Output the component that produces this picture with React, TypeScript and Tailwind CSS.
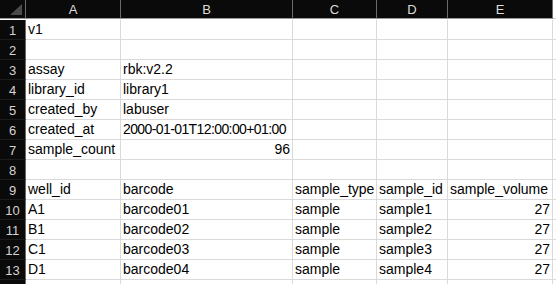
import React from "react";

type Cell = { t: string; r?: boolean; tight?: boolean };

const rows: Cell[][] = [
  [{ t: "v1" }],
  [],
  [{ t: "assay" }, { t: "rbk:v2.2" }],
  [{ t: "library_id" }, { t: "library1" }],
  [{ t: "created_by" }, { t: "labuser" }],
  [{ t: "created_at" }, { t: "2000-01-01T12:00:00+01:00", tight: true }],
  [{ t: "sample_count" }, { t: "96", r: true }],
  [],
  [{ t: "well_id" }, { t: "barcode" }, { t: "sample_type" }, { t: "sample_id" }, { t: "sample_volume" }],
  [{ t: "A1" }, { t: "barcode01" }, { t: "sample" }, { t: "sample1" }, { t: "27", r: true }],
  [{ t: "B1" }, { t: "barcode02" }, { t: "sample" }, { t: "sample2" }, { t: "27", r: true }],
  [{ t: "C1" }, { t: "barcode03" }, { t: "sample" }, { t: "sample3" }, { t: "27", r: true }],
  [{ t: "D1" }, { t: "barcode04" }, { t: "sample" }, { t: "sample4" }, { t: "27", r: true }],
];

const letters = ["A", "B", "C", "D", "E"];

export default function App() {
  return (
    <div
      className="w-[556px] h-[284px] overflow-hidden bg-white"
      style={{ fontFamily: '"Liberation Sans", Arial, sans-serif' }}
    >
      <div className="grid grid-cols-[26px_95px_172px_84px_71px_105px_3px] auto-rows-[20px]">
        {/* header */}
        <div className="h-[19px] bg-[#0a0a0a] border-r border-b border-r-[#6b6b6b] border-b-[#9a9a9a] relative">
          <svg className="absolute left-0 top-0" width="25" height="18" viewBox="0 0 25 18">
            <polygon points="10,15 22,15 22,4" fill="#4a4a4a" />
          </svg>
        </div>
        {letters.map((l) => (
          <div
            key={l}
            className="h-[19px] bg-[#0a0a0a] border-r border-b border-r-[#6b6b6b] border-b-[#9a9a9a] flex items-center justify-center text-[13px] leading-none text-[#dcdcdc]"
          >
            {l}
          </div>
        ))}
        <div className="h-[19px] bg-white border-b border-b-[#d4d4d4]" />
        {/* body */}
        {rows.map((row, i) => (
          <React.Fragment key={i}>
            <div className="bg-[#0a0a0a] border-r border-b border-r-[#6b6b6b] border-b-[#1c1c1c] flex items-center justify-center text-[13px] leading-none text-[#d4d4d4] pt-[1px]">
              {i + 1}
            </div>
            {[0, 1, 2, 3, 4].map((c) => {
              const cell = row[c];
              return (
                <div
                  key={c}
                  className={
                    "border-r border-b border-[#dadada] flex items-end pb-[2px] px-[2px] text-[14px] leading-[16px] text-black whitespace-nowrap overflow-visible " +
                    (cell && cell.r ? "justify-end " : "justify-start ") +
                    (cell && cell.tight ? "tracking-[-0.6px]" : "")
                  }
                >
                  {cell ? cell.t : ""}
                </div>
              );
            })}
            <div className="border-b border-[#dadada]" />
          </React.Fragment>
        ))}
        {/* partial row 14 */}
        <div className="bg-[#0a0a0a] border-r border-r-[#6b6b6b]" />
        {[0, 1, 2, 3, 4].map((c) => (
          <div key={c} className="border-r border-[#dadada]" />
        ))}
        <div />
      </div>
    </div>
  );
}
